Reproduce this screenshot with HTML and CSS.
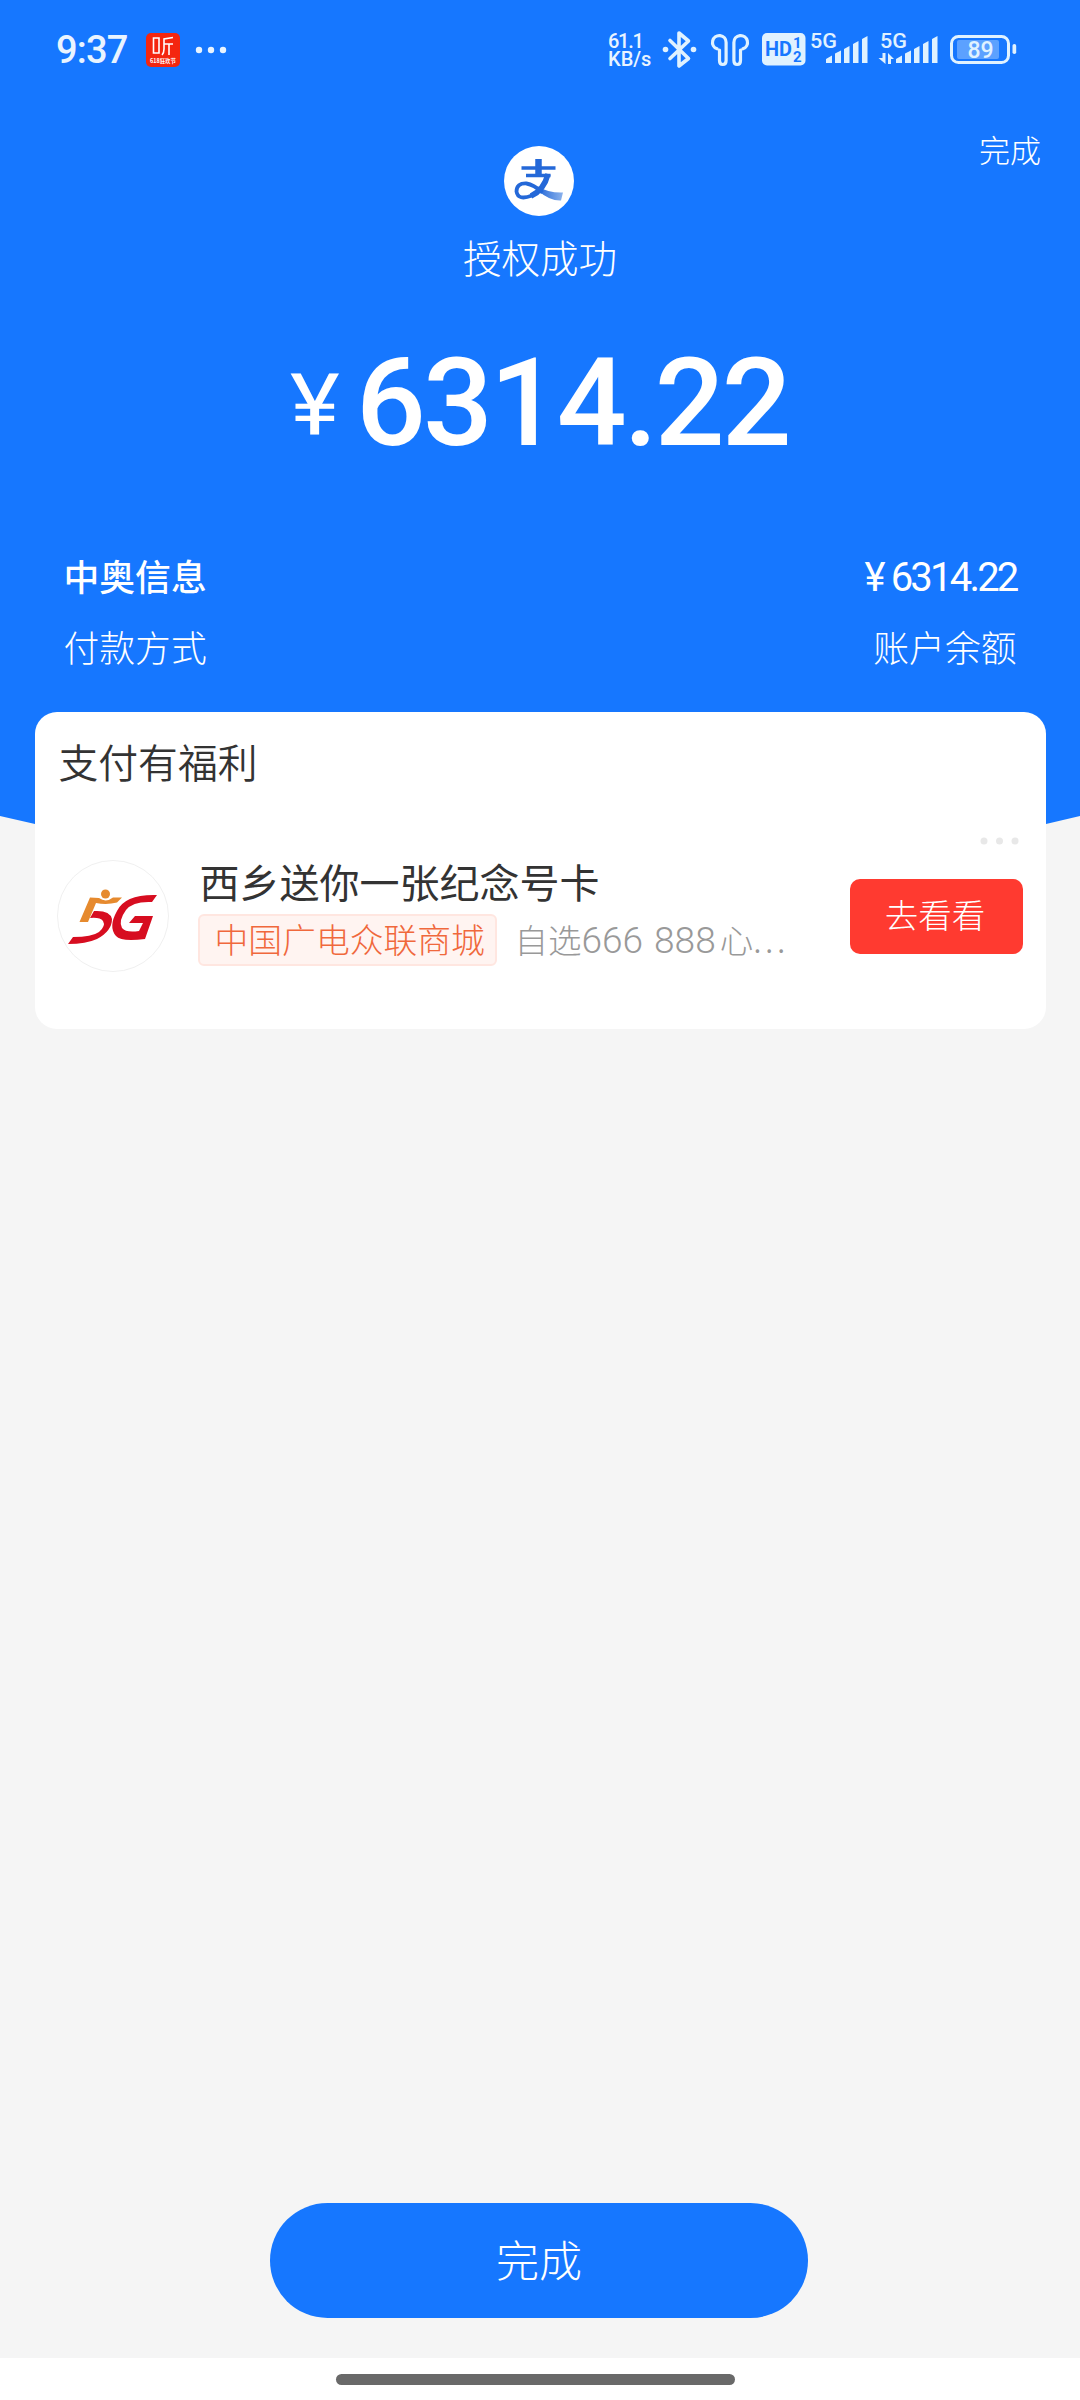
FILE: index.html
```html
<!DOCTYPE html>
<html lang="zh-CN">
<head>
<meta charset="utf-8">
<title>授权成功</title>
<link rel="stylesheet" href="styles.css">
</head>
<body>
<div class="screen">
  <header class="hero">
    <div class="status">
      <span class="clock">9:37</span>
      <svg class="app" viewBox="0 0 34 34" width="34" height="34">
        <rect width="34" height="34" rx="5" fill="#f4260f"/>
        <g fill="none" stroke="#fff" stroke-width="1.6"><path d="M7.500 5h5.500v15H7.500zM27 4.500L18 6v10q0 4-2 6M18 11h9M23 11v11"/></g>
        <text class="app-label" x="17" y="29.500" text-anchor="middle" textLength="26" lengthAdjust="spacingAndGlyphs">618狂欢节</text>
      </svg>
      <svg class="more" viewBox="0 0 32 8" width="32" height="8" fill="#e9f4ff"><circle cx="4" cy="4" r="3.200"/><circle cx="16" cy="4" r="3.200"/><circle cx="28" cy="4" r="3.200"/></svg>
      <div class="speed"><span>61.1</span><span>KB/s</span></div>
      <svg class="sys" viewBox="655 20 385 60" width="385" height="60">
        <g fill="none" stroke="#e0f2ff" stroke-width="3.600" stroke-linejoin="round" stroke-linecap="round">
          <path d="M670 40.500L688.500 58.500 679 66V33L688.500 41 670 58.500"/>
          <path stroke-width="3.200" d="M719.500 50V60.500q0 4 3.300 4t3.300-4V42.500a6.800 6.800 0 1 0-9 6.300M740.500 50V60.500q0 4-3.300 4t-3.300-4V42.500a6.800 6.800 0 1 1 9 6.300"/>
        </g>
        <g fill="#e0f2ff">
          <circle cx="665.500" cy="49.500" r="2.800"/><circle cx="693.500" cy="49.500" r="2.800"/>
          <rect x="762" y="33" width="43.500" height="32.500" rx="5"/>
          <path d="M826 63v-4l6-3.500V63zM835 63V53.500l6-3V63zM844 63V49l5.500-3V63zM853 63V44l5.500-3V63zM862 63V39l5.500-3V63z"/>
          <path d="M896 63v-4l6-3.500V63zM905 63V53.500l6-3V63zM914 63V49l5.500-3V63zM923 63V44l5.500-3V63zM932 63V39l5.500-3V63z"/>
          <path d="M882.500 53h3v11l-7-6h4zM888 64V53l6 6h-3v5z"/>
          <rect x="957" y="40" width="42" height="19" rx="2" opacity=".35"/>
          <rect x="1012.500" y="44" width="3.700" height="10" rx="1.800"/>
        </g>
        <rect x="951.500" y="36.500" width="57" height="26" rx="7" fill="none" stroke="#e0f2ff" stroke-width="3"/>
        <g class="sys-text">
          <text x="765" y="56" font-size="20" textLength="27" lengthAdjust="spacingAndGlyphs" class="blue">HD</text>
          <text x="793" y="48" font-size="15" class="blue">1</text>
          <text x="793" y="61.500" font-size="15" class="blue">2</text>
          <text x="810" y="48" font-size="20" textLength="27" lengthAdjust="spacingAndGlyphs">5G</text>
          <text x="880" y="48" font-size="20" textLength="27" lengthAdjust="spacingAndGlyphs">5G</text>
          <text x="967.500" y="57.500" font-size="23" textLength="26">89</text>
        </g>
      </svg>
    </div>
    <a class="done-link">完成</a>
    <svg class="alipay" viewBox="0 0 70 70" width="70" height="70">
      <defs><linearGradient id="tail"><stop offset="0" stop-color="#2468d8"/><stop offset="1" stop-color="#8bb2ec"/></linearGradient></defs>
      <circle cx="35" cy="35" r="35" fill="#fff"/>
      <path d="M34 40.500q10 6.500 25 6l-2 8q-11 .500-22-9z" fill="url(#tail)"/>
      <g fill="none" stroke="#2468d8">
        <path d="M34.500 13V29" stroke-width="6.500"/><path d="M17.500 22H51.500M22 29.500H46.500" stroke-width="3.400"/>
        <path d="M44 28Q40 44 27 50" stroke-width="5.500"/>
        <path d="M28 49.500Q14 55 12.500 45.500q0-8.500 10-8 7 1 16 9" stroke-width="3.800"/>
      </g>
    </svg>
    <div class="state">授权成功</div>
    <div class="amount"><span class="yen">¥</span><span class="num">6314.22</span></div>
    <div class="info">
      <div class="row strong"><span>中奥信息</span><span class="price"><i>¥</i>6314.22</span></div>
      <div class="row"><span>付款方式</span><span>账户余额</span></div>
    </div>
  </header>
  <main class="content">
    <section class="card">
      <h2 class="card-title">支付有福利</h2>
      <svg class="dots" viewBox="0 0 40 8" width="40" height="8" fill="#e8e8e8"><circle cx="4" cy="4" r="3.500"/><circle cx="19.500" cy="4" r="3.500"/><circle cx="35" cy="4" r="3.500"/></svg>
      <div class="offer">
        <svg class="logo" viewBox="0 0 112 112" width="112" height="112">
          <circle cx="56" cy="56" r="55.500" fill="#fff" stroke="#f0f0f0"/>
          <circle cx="48.500" cy="34" r="4.500" fill="#e68a2e"/>
          <path d="M33 37.500L42 38Q49 43 56 37.500h9L60 42.500Q50 45 39 43L31 62H22.500z" fill="#e68a2e"/>
          <path d="M37 51q16-1 18 8 0 12-15 20-11 5-29 5l5-7q19 0 26-5 7-6 4-11-3-4-13-3z" fill="#d70d20"/>
          <path d="M100 35l-5 7q-19-1-26 8-8 11-4 18 4 5 17 3l4-8H72l6-7h18l-8 23q-24 3-29-3-8-9 1-25 8-17 40-16z" fill="#d70d20"/>
        </svg>
        <div class="offer-text">
          <div class="offer-title">西乡送你一张纪念号卡</div>
          <div class="offer-sub"><span class="tag">中国广电众联商城</span><span class="desc">自选<b>666 888</b>心<em>...</em></span></div>
        </div>
        <a class="go">去看看</a>
      </div>
    </section>
    <button class="finish">完成</button>
  </main>
  <footer class="nav"><div class="handle"></div></footer>
</div>
</body>
</html>
```
FILE: styles.css
```css
* { box-sizing: border-box; }
body { margin: 0; font-family: "Noto Sans CJK SC", sans-serif; font-weight: 300; }
.screen { position: relative; width: 1080px; height: 2400px; display: flex; flex-direction: column; background: #f5f5f5; }
.hero { height: 851px; flex: none; background: #1677ff; clip-path: polygon(0 0, 100% 0, 100% 816px, 1046px 824px, 900px 850px, 180px 850px, 35px 824px, 0 816px); color: #fff; display: flex; flex-direction: column; align-items: center; }
.status { width: 100%; height: 100px; padding-left: 56px; display: flex; align-items: center; font-family: Roboto, "Noto Sans CJK SC", sans-serif; color: #e9f4ff; flex: none; }
.clock { width: 90px; font-size: 38px; font-weight: 500; letter-spacing: -.800px; }
.app { overflow: visible; }
.app-label { font: 700 5.500px "Noto Sans CJK SC", sans-serif; fill: #fff; }
.more { margin-left: 15px; }
.speed { width: 47px; margin-left: 381px; display: flex; flex-direction: column; font-size: 20px; line-height: 18px; font-weight: 500; white-space: nowrap; flex: none; }
.speed span:first-child { letter-spacing: -1.300px; }
.sys { flex: none; }
.sys-text { font-family: Roboto, sans-serif; font-weight: 500; fill: #e0f2ff; }
.sys-text .blue { fill: #1677ff; font-weight: 700; }
.done-link { align-self: flex-end; margin: 26px 39px 0 0; font-size: 31px; line-height: 46px; height: 46px; }
.alipay { margin: -26px 2px 0 0; flex: none; }
.state { margin-top: 12px; font-size: 38.500px; line-height: 56px; }
.amount { display: flex; align-items: flex-end; margin-top: 49px; height: 140px; font-family: Roboto, sans-serif; font-weight: 500; width: 500px; }
.yen { width: 66px; font-size: 86px; font-weight: 450; line-height: 136px; transform: scaleX(1.1); transform-origin: left; }
.num { font-size: 123px; line-height: 140px; letter-spacing: -3px; }
.info { width: 953px; margin-top: 76px; display: flex; flex-direction: column; gap: 18px; }
.row { display: flex; justify-content: space-between; font-size: 35.800px; line-height: 53px; }
.strong { font-weight: 500; }
.price { font-family: Roboto, sans-serif; font-weight: 400; font-size: 40px; letter-spacing: -2.800px; line-height: 57px; height: 53px; }
.price i { font-style: normal; margin-right: 8px; }
.content { position: relative; margin-top: -139px; flex: 1; display: flex; flex-direction: column; align-items: center; }
.card { width: 1011px; height: 317px; background: #fff; border-radius: 22px; padding: 20px 23px 0 24px; display: flex; flex-direction: column; }
.card-title { margin: 0; font-size: 39.800px; line-height: 58px; font-weight: 350; color: #333; }
.dots { align-self: flex-end; margin: 47px 3px 0 0; }
.offer { display: flex; margin-top: 15px; align-items: flex-start; height: 112px; }
.logo { margin-left: -2px; flex: none; }
.offer-text { margin-left: 29px; width: 652px; flex: none; }
.offer-title { font-size: 40px; line-height: 43px; height: 54px; color: #333; font-weight: 400; padding-left: 2px; }
.offer-sub { display: flex; align-items: center; gap: 18px; height: 52px; white-space: nowrap; }
.tag { width: 299px; height: 52px; border: 2px solid #ffe6e0; border-radius: 6px; background: #fff4f1; color: #f0683c; font-size: 33.800px; line-height: 46px; padding-left: 15px; }
.desc { color: #999; font-size: 33.500px; line-height: 50px; }
.desc b { font-family: Roboto, sans-serif; font-weight: 300; font-size: 37px; letter-spacing: 0; word-spacing: 2px; margin-right: 4px; }
.desc em { font-style: normal; letter-spacing: 3.500px; }
.go { width: 173px; height: 75px; margin-top: 19px; border-radius: 10px; background: #ff3a30; color: #fff; font-size: 33.500px; line-height: 70px; text-align: center; padding-right: 2px; }
.finish { margin: 1174px 2px 0 0; width: 538px; height: 115px; border: 0; border-radius: 58px; background: #1677ff; color: #fff; font: 300 43px "Noto Sans CJK SC", sans-serif; padding: 0 0 5px; }
.nav { height: 42px; background: #fff; padding: 16px 0 0 336px; }
.handle { width: 399px; height: 11px; border-radius: 6px; background: #696969; }
```
